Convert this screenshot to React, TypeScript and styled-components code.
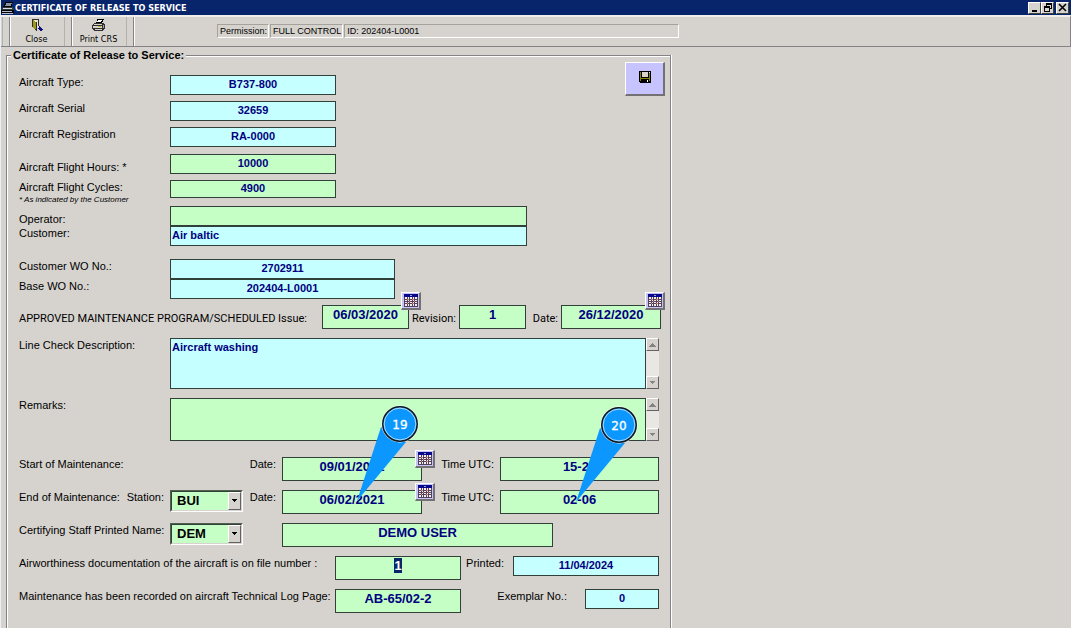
import React, { useEffect, useRef } from "react";
import styled, { createGlobalStyle } from "styled-components";

const face = "#d6d3ce";
const shade = "#848284";
const green = "#c6ffc6";
const aqua = "#c6ffff";
const navy = "#000080";
const sans = '"Liberation Sans", Arial, sans-serif';
const ui = '"DejaVu Sans Condensed", "DejaVu Sans", Tahoma, sans-serif';

const Global = createGlobalStyle`
  * { box-sizing: border-box; }
  body { margin: 0; background: ${face}; font-family: ${sans}; font-size: 11px; color: #000; }
  button, input, select, textarea { font-family: inherit; margin: 0; border-radius: 0; outline: none; }
`;

const Page = styled.div`
  display: flex;
  flex-direction: column;
  min-height: 100vh;
  overflow: hidden;
  border-left: 1px solid #eaf0fa;
`;

const TitleBar = styled.header`
  display: flex;
  align-items: center;
  height: 15px;
  padding-right: 2px;
  background: #08246b;
  color: #fff;
`;

const Title = styled.h1`
  flex: 1;
  margin: 0;
  font: bold 9px/14px ${ui};
  white-space: nowrap;
`;

const WindowButton = styled.button<{ $gap?: boolean }>`
  display: grid;
  place-items: center;
  width: 13px;
  height: 12px;
  margin-left: ${(p) => (p.$gap ? 2 : 0)}px;
  padding: 0;
  background: ${face};
  border: 1px solid;
  border-color: #fff #424142 #424142 #fff;
`;

const Toolbar = styled.div`
  display: flex;
  height: 32px;
  border-top: 2px solid #efeeea;
  border-bottom: 1px solid ${shade};
  border-right: 1px solid ${shade};
`;

const Grip = styled.span`
  width: 8px;
  margin-left: 1px;
  border-left: 1px solid #b5b2ad;
  border-right: 1px solid ${shade};
  box-shadow: 1px 0 0 #fff;
`;

const ToolButton = styled.button`
  display: flex;
  flex-direction: column;
  align-items: center;
  gap: 2px;
  width: 53px;
  padding: 2px 0 0;
  background: none;
  border: 0;
  font: 9px/12px ${ui};
  white-space: nowrap;
`;

const StatusBar = styled.div`
  display: flex;
  gap: 1px;
  flex: 0 1 462px;
  margin: 7px 0 8px 83px;
`;

const Pane = styled.span<{ $grow?: boolean }>`
  flex: ${(p) => (p.$grow ? "1" : "none")};
  padding: 0 1px 0 2px;
  border: 1px solid;
  border-color: #a5a29c #fff #fff #a5a29c;
  font-size: 9px;
  line-height: 12px;
  white-space: nowrap;
`;

const Panel = styled.fieldset`
  position: relative;
  flex: 1;
  width: 100%;
  max-width: 665px;
  min-width: 0;
  margin: 1px 0 0 5px;
  padding: 0 5px 15px 12px;
  border: 1px solid ${shade};
  border-bottom: 0;
  box-shadow: inset 1px 1px 0 #fff, 1px 0 0 #fff;
`;

const Legend = styled.legend`
  margin-left: -8px;
  padding: 0 2px;
  background: ${face};
  font-weight: bold;
  line-height: 14px;
`;

const Top = styled.div`
  display: flex;
  justify-content: space-between;
  align-items: flex-start;
`;

const SaveButton = styled.button`
  display: grid;
  place-items: center;
  width: 40px;
  height: 34px;
  padding: 0 0 4px;
  background: #c6c3ff;
  border: 1px solid #fff;
  border-right: 2px solid #737173;
  border-bottom: 2px solid #737173;
`;

const Stack = styled.div<{ $gap?: number; $after?: number; $before?: number }>`
  display: flex;
  flex-direction: column;
  gap: ${(p) => p.$gap ?? 0}px;
  padding-top: ${(p) => p.$before ?? 0}px;
  margin-bottom: ${(p) => p.$after ?? 0}px;
`;

const Row = styled.div<{ $cols: string; $wide?: boolean }>`
  display: grid;
  grid-template-columns: ${(p) => p.$cols};
  align-items: start;
  padding-right: ${(p) => (p.$wide ? 4 : 6)}px;
`;

const Label = styled.label<{ $end?: boolean; $bottom?: boolean; $pad?: number }>`
  line-height: 14px;
  white-space: nowrap;
  align-self: ${(p) => (p.$bottom ? "end" : "start")};
  text-align: ${(p) => (p.$end ? "right" : "left")};
  padding-right: ${(p) => p.$pad ?? (p.$end ? 6 : 0)}px;
`;

const ProgrammeLabel = styled(Label)`
  font-family: Roboto, ${sans};
  line-height: 20px;
  align-self: end;
`;

const LabelPair = styled.div`
  display: flex;
  justify-content: space-between;
`;

const Note = styled.div`
  font-size: 8px;
  font-style: italic;
  line-height: 12px;
`;

const Field = styled.input<{ $fill: string; $size?: "small" | "large"; $left?: boolean; $short?: boolean }>`
  display: block;
  width: 100%;
  height: ${(p) => (p.$size === "large" ? 24 : p.$short ? 18 : 20)}px;
  padding: ${(p) => (p.$size === "large" ? "0 1px 5px" : "0 1px 2px")};
  background: ${(p) => p.$fill};
  border: 1px solid #31413a;
  color: ${navy};
  font-size: ${(p) => (p.$size === "large" ? 13 : 11)}px;
  font-weight: bold;
  text-align: ${(p) => (p.$left ? "left" : "center")};
  &::selection { background: #08246b; color: #fff; }
`;

const MemoBox = styled.div<{ $height: number }>`
  display: flex;
  height: ${(p) => p.$height}px;
`;

const Memo = styled.textarea<{ $fill: string }>`
  flex: 1;
  min-width: 0;
  padding: 1px;
  resize: none;
  overflow: hidden;
  background: ${(p) => p.$fill};
  border: 1px solid #31413a;
  color: ${navy};
  font-size: 11px;
  line-height: 14px;
  font-weight: bold;
`;

const Scroll = styled.div`
  display: flex;
  flex-direction: column;
  justify-content: space-between;
  width: 13px;
  background: #e9e7e4;
`;

const ScrollButton = styled.button`
  display: grid;
  place-items: center;
  width: 13px;
  height: 13px;
  padding: 0;
  background: ${face};
  border: 1px solid;
  border-color: #fff #636163 #636163 #fff;
`;

const DateBox = styled.div`
  position: relative;
`;

const CalendarButton = styled.button<{ $right: number; $top: number }>`
  position: absolute;
  right: ${(p) => p.$right}px;
  top: ${(p) => p.$top}px;
  display: grid;
  place-items: center;
  width: 20px;
  height: 18px;
  padding: 0;
  background: #c6c3f7;
  border: 1px solid #fff;
  border-right: 2px solid #737173;
  border-bottom: 2px solid #737173;
`;

const SelectBox = styled.div`
  position: relative;
  height: 22px;
  border: 1px solid;
  border-color: #52614f #fff #fff #52614f;
`;

const Select = styled.select`
  display: block;
  width: 100%;
  height: 20px;
  padding: 0 14px 1px 5px;
  appearance: none;
  background: ${green};
  border: 1px solid;
  border-color: #31413a ${face} ${face} #31413a;
  color: #000;
  font-size: 13px;
  font-weight: bold;
`;

const Arrow = styled.span`
  position: absolute;
  right: 1px;
  top: 1px;
  bottom: 1px;
  display: grid;
  place-items: center;
  width: 13px;
  background: ${face};
  border: 1px solid;
  border-color: #fff #636163 #636163 #fff;
  pointer-events: none;
`;

const PinSvg = styled.svg<{ $x: number; $y: number }>`
  position: absolute;
  left: ${(p) => p.$x}px;
  top: ${(p) => p.$y}px;
  pointer-events: none;
`;

function Pin({ n, x, y }: { n: number; x: number; y: number }) {
  return (
    <PinSvg $x={x} $y={y} width="64" height="98" viewBox="0 0 64 98">
      <path d="M26 22 L51 37 L2 96 Z" fill="#0c97ff" />
      <circle cx="45" cy="19" r="18.5" fill="#fff" />
      <circle cx="45" cy="19" r="17.2" fill="#0c97ff" stroke="#101820" strokeWidth="1.6" />
      <circle cx="45" cy="19" r="15.9" fill="none" stroke="#d8efff" strokeWidth="0.8" />
      <text x="45" y="24" textAnchor="middle" fontFamily='"DejaVu Sans", sans-serif' fontSize="12" stroke="#fff" strokeWidth="0.3" fill="#fff">{n}</text>
    </PinSvg>
  );
}

function PrinterIcon() {
  return (
    <svg width="14" height="12" viewBox="0 0 14 12" shapeRendering="crispEdges">
      <path d="M5 0h7v1h-1v2h-1v1H4V3h1z" fill="#000" />
      <path d="M6 1h4v1H9v1H5V2h1z" fill="#fff" />
      <path d="M2 4h10v1h1v5h-1v1h-1v1H2v-1H1v-1H0V6h1V5h1z" fill="#31302f" />
      <path d="M3 5h7v1H2V5zM1 7h9v2H1zM3 10h7v1H3z" fill="#d6d3ce" />
      <path d="M11 6h1v3h-1z" fill="#a5a2a5" />
      <path d="M6 7h3v1H6z" fill="#c8bd20" />
    </svg>
  );
}

function TitleIcon() {
  return (
    <svg width="14" height="14" viewBox="0 0 14 14" shapeRendering="crispEdges">
      <path d="M4 1h8v1h-1v4H2V5h1V3h1z" fill="#000" />
      <path d="M5 2h6v1h-1v2H4V4h1z" fill="#8494a0" />
      <path d="M2 6h10v1h1v3H1V7h1z" fill="#31393f" />
      <path d="M2 7h9v1H2z" fill="#d0dae0" />
      <path d="M0 9h13v3H0z" fill="#000" />
      <path d="M1 10h10v1H1zM1 12h11v1H1z" fill="#b5bec6" />
    </svg>
  );
}

function ExitIcon() {
  return (
    <svg width="12" height="12" viewBox="0 0 12 12" shapeRendering="crispEdges">
      <path d="M1 0h7v7H7V1H2v7H1z" fill="#31302f" />
      <path d="M2 1h1v1h1v1h1v8H4v-1H3V9H2z" fill="#9c9a18" />
      <path d="M3 1h4v7H5V3H4V2H3z" fill="#e9e6c8" />
      <path d="M5 3h1v9H5v-1H4v-1h1z" fill="#31302f" />
      <path d="M8 7h1v1h1v1h1v1h1v1h-1v1H9v-1H8v-1H7V9h1z" fill="#101084" />
    </svg>
  );
}

function FloppyIcon() {
  return (
    <svg width="12" height="12" viewBox="0 0 12 12" shapeRendering="crispEdges">
      <path d="M0 0h12v12H1v-1H0z" fill="#000" />
      <path d="M1 1h1v6h8V1h1v9h-1V8H2v2H1z" fill="#848200" />
      <path d="M3 1h6v5H3z" fill="#d6d3ce" />
      <path d="M8 9h1v2H8z" fill="#fff" />
      <path d="M10 1h1v1h-1z" fill="#d6d3ce" />
    </svg>
  );
}

function CalendarIcon() {
  return (
    <svg width="14" height="13" viewBox="0 0 14 13" shapeRendering="crispEdges">
      <path d="M0 0h14v13H0z" fill="#52415a" />
      <path d="M0 0h14v3H0z" fill="#08088c" />
      <path d="M6 1h2v1H6z" fill="#9ca2c6" />
      <path
        d="M1 3h2v2H1zM4 3h1v2H4zM6 3h2v2H6zM9 3h1v2H9zM11 3h2v2h-2zM1 6h2v1H1zM4 6h1v1H4zM6 6h2v1H6zM9 6h1v1H9zM11 6h2v1h-2zM1 8h2v1H1zM4 8h1v1H4zM6 8h2v1H6zM9 8h1v1H9zM11 8h2v1h-2zM1 10h2v2H1zM4 10h1v2H4zM6 10h2v2H6zM9 10h1v2H9zM11 10h2v2h-2z"
        fill="#f4eef0"
      />
      <path d="M3 5h2v1H3zM8 5h2v1H8zM5 7h1v1H5zM10 7h1v1h-1zM3 9h1v1H3zM8 9h2v1H8z" fill="#c67a6b" />
    </svg>
  );
}

function Triangle({ up, color = "#000" }: { up?: boolean; color?: string }) {
  return (
    <svg width="7" height="4" viewBox="0 0 7 4" shapeRendering="crispEdges">
      <path d={up ? "M3 0h1v1h1v1h1v1h1v1H0V3h1V2h1V1h1z" : "M1 0h5v1H5v1H4v1H3V2H2V1H1z"} fill={color} />
    </svg>
  );
}

function MemoField({ id, fill, height, text }: { id: string; fill: string; height: number; text: string }) {
  return (
    <MemoBox $height={height}>
      <Memo id={id} $fill={fill} defaultValue={text} />
      <Scroll>
        <ScrollButton type="button" aria-label="Scroll up"><Triangle up color={shade} /></ScrollButton>
        <ScrollButton type="button" aria-label="Scroll down"><Triangle color={shade} /></ScrollButton>
      </Scroll>
    </MemoBox>
  );
}

function DateField({ id, value, right, top }: { id: string; value: string; right: number; top: number }) {
  return (
    <DateBox>
      <Field id={id} $fill={green} $size="large" defaultValue={value} />
      <CalendarButton type="button" aria-label="Pick a date" $right={right} $top={top}>
        <CalendarIcon />
      </CalendarButton>
    </DateBox>
  );
}

function Combo({ id, value, label }: { id: string; value: string; label?: string }) {
  return (
    <SelectBox>
      <Select id={id} aria-label={label} defaultValue={value}><option>{value}</option></Select>
      <Arrow><Triangle /></Arrow>
    </SelectBox>
  );
}

const shortCols = "151px 166px";
const longCols = "151px minmax(0, 357px)";
const orderCols = "151px 225px";
const memoCols = "151px minmax(0, 1fr)";
const timeCols = "151px 73px 39px 140px 78px minmax(0, 1fr)";

export default function App() {
  const fileNumber = useRef<HTMLInputElement>(null);
  useEffect(() => {
    fileNumber.current?.focus();
    fileNumber.current?.select();
  }, []);

  return (
    <Page>
      <Global />
      <TitleBar>
        <TitleIcon />
        <Title>CERTIFICATE OF RELEASE TO SERVICE</Title>
        <WindowButton aria-label="Minimize">
          <svg width="9" height="9" viewBox="0 0 9 9"><path d="M2 7h5v2H2z" /></svg>
        </WindowButton>
        <WindowButton aria-label="Restore">
          <svg width="9" height="9" viewBox="0 0 9 9" shapeRendering="crispEdges">
            <path d="M3 0h6v6H7V5h1V2H4v1H3zM1 3h6v6H1zM2 5v3h4V5z" fillRule="evenodd" />
          </svg>
        </WindowButton>
        <WindowButton aria-label="Close window" $gap>
          <svg width="9" height="9" viewBox="0 0 9 9"><path d="M1 1l7 7M8 1l-7 7" stroke="#000" strokeWidth="1.6" /></svg>
        </WindowButton>
      </TitleBar>
      <Toolbar>
        <Grip />
        <ToolButton type="button"><ExitIcon />Close</ToolButton>
        <Grip />
        <ToolButton type="button"><PrinterIcon />Print CRS</ToolButton>
        <Grip />
        <StatusBar>
          <Pane>Permission:</Pane>
          <Pane>FULL CONTROL</Pane>
          <Pane $grow>ID: 202404-L0001</Pane>
        </StatusBar>
      </Toolbar>

      <Panel>
        <Legend>Certificate of Release to Service:</Legend>
        <Top>
          <Stack $gap={6} $before={13} $after={7}>
            <Row $cols={shortCols}>
              <Label htmlFor="type">Aircraft Type:</Label>
              <Field id="type" $fill={aqua} defaultValue="B737-800" />
            </Row>
            <Row $cols={shortCols}>
              <Label htmlFor="serial">Aircraft Serial</Label>
              <Field id="serial" $fill={aqua} defaultValue="32659" />
            </Row>
            <Row $cols={shortCols}>
              <Label htmlFor="reg">Aircraft Registration</Label>
              <Field id="reg" $fill={aqua} defaultValue="RA-0000" />
            </Row>
          </Stack>
          <SaveButton type="button" aria-label="Save"><FloppyIcon /></SaveButton>
        </Top>
        <Stack $gap={6}>
          <Row $cols={shortCols}>
            <Label htmlFor="hours" $bottom>Aircraft Flight Hours: *</Label>
            <Field id="hours" $fill={green} defaultValue="10000" />
          </Row>
          <Row $cols={shortCols}>
            <Stack>
              <Label htmlFor="cycles">Aircraft Flight Cycles:</Label>
              <Note>* As indicated by the Customer</Note>
            </Stack>
            <Field id="cycles" $fill={green} $short defaultValue="4900" />
          </Row>
        </Stack>
        <Stack $after={13}>
          <Row $cols={longCols}>
            <Label htmlFor="operator" $bottom>Operator:</Label>
            <Field id="operator" $fill={green} $left defaultValue="" />
          </Row>
          <Row $cols={longCols}>
            <Label htmlFor="customer">Customer:</Label>
            <Field id="customer" $fill={aqua} $left defaultValue="Air baltic" />
          </Row>
        </Stack>
        <Stack $after={6}>
          <Row $cols={orderCols}>
            <Label htmlFor="cwo">Customer WO No.:</Label>
            <Field id="cwo" $fill={aqua} defaultValue="2702911" />
          </Row>
          <Row $cols={orderCols}>
            <Label htmlFor="bwo">Base WO No.:</Label>
            <Field id="bwo" $fill={aqua} defaultValue="202404-L0001" />
          </Row>
        </Stack>
        <Stack $gap={9} $after={16}>
          <Row $cols="303px 87px 50px 67px 35px minmax(0, 1fr)" $wide>
            <ProgrammeLabel htmlFor="issue">APPROVED MAINTENANCE PROGRAM/SCHEDULED Issue:</ProgrammeLabel>
            <DateField id="issue" value="06/03/2020" right={-12} top={-13} />
            <ProgrammeLabel htmlFor="revision" $end $pad={3}>Revision:</ProgrammeLabel>
            <Field id="revision" $fill={green} $size="large" defaultValue="1" />
            <ProgrammeLabel htmlFor="pdate" $end $pad={3}>Date:</ProgrammeLabel>
            <DateField id="pdate" value="26/12/2020" right={-4} top={-13} />
          </Row>
          <Row $cols={memoCols}>
            <Label htmlFor="check">Line Check Description:</Label>
            <MemoField id="check" fill={aqua} height={51} text="Aircraft washing" />
          </Row>
          <Row $cols={memoCols}>
            <Label htmlFor="remarks">Remarks:</Label>
            <MemoField id="remarks" fill={green} height={43} text="" />
          </Row>
        </Stack>
        <Stack $gap={9}>
          <Row $cols={timeCols}>
            <Label htmlFor="sdate">Start of Maintenance:</Label>
            <span />
            <Label htmlFor="sdate" $end>Date:</Label>
            <DateField id="sdate" value="09/01/2021" right={-13} top={-7} />
            <Label htmlFor="stime" $end>Time UTC:</Label>
            <Field id="stime" $fill={green} $size="large" defaultValue="15-20" />
          </Row>
          <Row $cols={timeCols}>
            <LabelPair>
              <Label htmlFor="edate">End of Maintenance:</Label>
              <Label htmlFor="station" $end>Station:</Label>
            </LabelPair>
            <Combo id="station" value="BUI" />
            <Label htmlFor="edate" $end>Date:</Label>
            <DateField id="edate" value="06/02/2021" right={-13} top={-7} />
            <Label htmlFor="etime" $end>Time UTC:</Label>
            <Field id="etime" $fill={green} $size="large" defaultValue="02-06" />
          </Row>
          <Row $cols="151px 112px 271px">
            <Label htmlFor="staff">Certifying Staff Printed Name:</Label>
            <Row $cols="73px"><Combo id="staffCode" value="DEM" label="Staff code" /></Row>
            <Field id="staff" $fill={green} $size="large" defaultValue="DEMO USER" />
          </Row>
          <Row $cols="316px 126px 52px minmax(0, 1fr)">
            <Label htmlFor="file">Airworthiness documentation of the aircraft is on file number :</Label>
            <Field id="file" ref={fileNumber} $fill={green} $size="large" defaultValue="1" />
            <Label htmlFor="printed" $end $pad={9}>Printed:</Label>
            <Field id="printed" $fill={aqua} defaultValue="11/04/2024" />
          </Row>
          <Row $cols="316px 126px 124px minmax(0, 1fr)">
            <Label htmlFor="log">Maintenance has been recorded on aircraft Technical Log Page:</Label>
            <Field id="log" $fill={green} $size="large" defaultValue="AB-65/02-2" />
            <Label htmlFor="exemplar" $end $pad={18}>Exemplar No.:</Label>
            <Field id="exemplar" $fill={aqua} defaultValue="0" />
          </Row>
        </Stack>
        <Pin n={19} x={348} y={343} />
        <Pin n={20} x={567} y={344} />
      </Panel>
    </Page>
  );
}
